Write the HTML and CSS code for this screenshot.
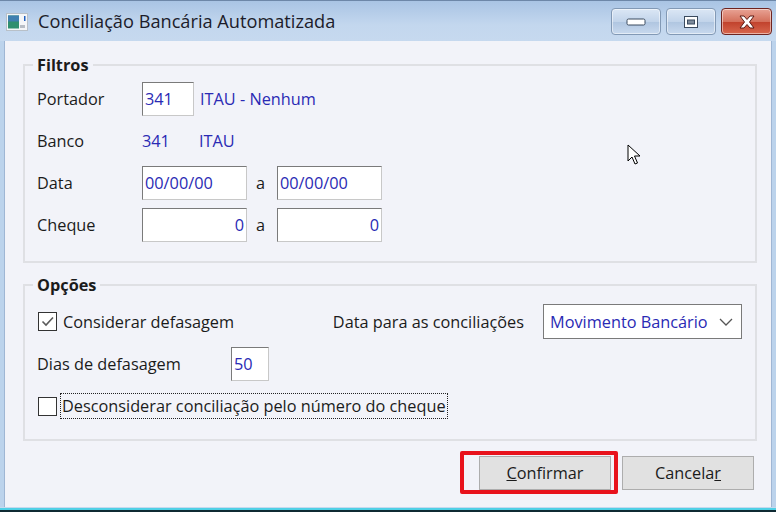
FILE: index.html
```html
<!DOCTYPE html>
<html lang="pt">
<head>
    <meta charset="UTF-8">
    <title>Conciliação Bancária Automatizada</title>
    <link rel="stylesheet" href="styles.css">
</head>
<body>
<div class="window">
    <div class="titlebar">
        <svg class="app-icon" width="22" height="18" viewBox="0 0 22 18">
            <rect x="0.5" y="0.5" width="21" height="17" fill="#f4f6f8" stroke="#b8c0c8"/>
            <rect x="2" y="2.5" width="11" height="13" fill="#2f8f6f"/>
            <rect x="2" y="2.5" width="11" height="6" fill="#3f7fb0"/>
            <rect x="14" y="12" width="5" height="3" fill="#b8bec6"/>
            <rect x="18" y="3" width="1.5" height="5" fill="#2060c0"/>
        </svg>
        <div class="title">Conciliação Bancária Automatizada</div>
        <div class="win-buttons">
            <div class="wbtn">
                <svg width="22" height="10" viewBox="0 0 22 10"><rect x="2" y="2" width="18" height="6" rx="1.5" fill="#fff" stroke="#3a4a5e"/></svg>
            </div>
            <div class="wbtn">
                <svg width="16" height="14" viewBox="0 0 16 14"><rect x="1.5" y="1.5" width="13" height="11" fill="#fff" stroke="#3a4a5e"/><rect x="4.5" y="5" width="7" height="4" fill="#7d8a9a" stroke="#3a4a5e"/></svg>
            </div>
            <div class="wbtn close">
                <svg width="22" height="16" viewBox="0 0 22 16"><path d="M4 2 H8 L11 5.5 L14 2 H18 L13.5 8 L18 14 H14 L11 10.5 L8 14 H4 L8.5 8 Z" fill="#fff" stroke="#5a1a14" stroke-width="1"/></svg>
            </div>
        </div>
    </div>

    <div class="content">
        <fieldset class="group filtros">
            <legend>Filtros</legend>
            <div class="row">
                <span class="lbl">Portador</span>
                <span class="box w-code">341</span>
                <span class="val">ITAU - Nenhum</span>
            </div>
            <div class="row">
                <span class="lbl">Banco</span>
                <span class="val code">341</span>
                <span class="val">ITAU</span>
            </div>
            <div class="row">
                <span class="lbl">Data</span>
                <span class="box w-range">00/00/00</span>
                <span class="sep">a</span>
                <span class="box w-range">00/00/00</span>
            </div>
            <div class="row">
                <span class="lbl">Cheque</span>
                <span class="box w-range num">0</span>
                <span class="sep">a</span>
                <span class="box w-range num">0</span>
            </div>
        </fieldset>

        <fieldset class="group opcoes">
            <legend>Opções</legend>
            <div class="row row-first">
                <span class="check on">
                    <svg width="17" height="17" viewBox="0 0 17 17"><path d="M3.5 8.5 L7 12 L14 4.5" fill="none" stroke="#5a5a5a" stroke-width="1.6"/></svg>
                </span>
                <span class="check-lbl">Considerar defasagem</span>
                <span class="lbl-data">Data para as conciliações</span>
                <span class="select">
                    Movimento Bancário
                    <svg class="chev" width="14" height="8" viewBox="0 0 14 8"><path d="M1 1 L7 7 L13 1" fill="none" stroke="#555" stroke-width="1.3"/></svg>
                </span>
            </div>
            <div class="row">
                <span class="lbl lbl-dias">Dias de defasagem</span>
                <span class="box w-dias">50</span>
            </div>
            <div class="row">
                <span class="check"></span>
                <span class="check-lbl focus">Desconsiderar conciliação pelo número do cheque</span>
            </div>
        </fieldset>

        <div class="actions">
            <div class="btn-wrap">
                <button class="btn"><u>C</u>onfirmar</button>
                <div class="highlight"></div>
            </div>
            <button class="btn">Cancela<u>r</u></button>
        </div>

        <svg class="cursor" width="14" height="22" viewBox="0 0 14 22">
            <path d="M1 1 L1 17 L5 13 L8 20 L10.5 19 L7.5 12 L13 12 Z" fill="#fff" stroke="#000" stroke-width="1"/>
        </svg>
    </div>
    <div class="taskbar-edge"></div>
</div>
</body>
</html>
```

FILE: styles.css
```css
* {
    box-sizing: border-box;
}

body {
    margin: 0;
    font-family: "Open Sans", "Noto Sans", sans-serif;
    font-size: 16.3px;
    color: #1b1b1b;
    background: #fff;
}

.window {
    width: 776px;
    height: 512px;
    overflow: hidden;
    display: flex;
    flex-direction: column;
    background: #bcd3ec;
}

.titlebar {
    height: 41px;
    display: flex;
    align-items: center;
    padding: 0 4px 0 6px;
    background: linear-gradient(#a9c4e4, #c3d7ee 60%, #c6d9ef);
    border-top: 1px solid #6d87a8;
}

.app-icon {
    margin-top: 2px;
}

.title {
    margin-left: 10px;
    font-size: 18.2px;
    color: #1c1c2a;
    flex: 1;
}

.win-buttons {
    display: flex;
    gap: 5px;
    align-self: flex-start;
    margin-top: 7px;
}

.wbtn {
    width: 50px;
    height: 27px;
    border: 1px solid #8299b5;
    border-radius: 4px;
    background: linear-gradient(#dbe7f5, #c2d4ea 50%, #afc5e0 51%, #c8d9ee);
    display: flex;
    align-items: center;
    justify-content: center;
    box-shadow: inset 0 0 0 1px rgba(255, 255, 255, 0.5);
}

.wbtn.close {
    width: 51px;
    border-color: #6e2420;
    background: linear-gradient(#e8a395, #d4705c 50%, #c0412c 51%, #d8674e);
}

.content {
    flex: 1;
    position: relative;
    margin: 0 4px 0 4px;
    padding: 14px 14px 0 18px;
    background: #f2f3f9;
    border-left: 1px solid #9fb6d4;
    border-right: 1px solid #9fb6d4;
}

.group {
    margin: 0;
    padding: 7px 13px 0 12px;
    border: 2px solid #dfe0e4;
    min-width: 0;
}

.group legend {
    font-weight: 700;
    padding: 0 4px;
    margin-left: -4px;
    line-height: 20px;
}

.filtros {
    height: 208px;
}

.opcoes {
    margin-top: 12px;
    height: 166px;
    padding-top: 9px;
}

.row {
    display: flex;
    align-items: center;
    height: 34px;
    margin-bottom: 8px;
}

.lbl {
    width: 105px;
}

.box {
    height: 34px;
    background: #fff;
    border: 1px solid #7a7a7a;
    border-color: #7a7a7a #c8c8c8 #c8c8c8 #7a7a7a;
    color: #2a2ab4;
    display: flex;
    align-items: center;
    padding: 0 2px;
}

.w-code {
    width: 52px;
}

.w-range {
    width: 105px;
}

.num {
    justify-content: flex-end;
}

.w-dias {
    width: 38px;
}

.val {
    color: #2a2ab4;
    margin-left: 6px;
}

.val.code {
    width: 51px;
    margin-left: 0;
}

.sep {
    width: 30px;
    padding-left: 9px;
}

.row-first {
    height: 35px;
}

.check {
    width: 19px;
    height: 19px;
    border: 1px solid #333;
    background: #fff;
    display: inline-flex;
    align-items: center;
    justify-content: center;
    margin-left: 1px;
}

.check-lbl {
    margin-left: 5px;
    padding: 1px 1px;
}

.check-lbl.focus {
    outline: 1px dotted #222;
    margin-left: 4px;
}

.lbl-data {
    margin-left: auto;
}

.select {
    margin-left: 19px;
    width: 199px;
    height: 35px;
    background: #fff;
    border: 1px solid #7a7a7a;
    color: #2a2ab4;
    display: flex;
    align-items: center;
    padding-left: 6px;
    position: relative;
}

.chev {
    position: absolute;
    right: 8px;
    top: 13px;
}

.lbl-dias {
    width: 194px;
}

.actions {
    display: flex;
    justify-content: flex-end;
    gap: 11px;
    margin-top: 15px;
    padding-right: 3px;
}

.btn-wrap {
    position: relative;
}

.btn {
    font-family: inherit;
    font-size: 16.3px;
    color: #1b1b1b;
    width: 132px;
    height: 34px;
    background: #e1e1e1;
    border: 1px solid #adadad;
    padding: 0;
}

.highlight {
    position: absolute;
    left: -19px;
    top: -5px;
    width: 158px;
    height: 43px;
    border: 4px solid #e8121c;
    border-radius: 2px;
    pointer-events: none;
}

.cursor {
    position: absolute;
    left: 622px;
    top: 103px;
}

.taskbar-edge {
    height: 5px;
    background: linear-gradient(#c7d9ee 0 1px, #4fd0e6 1px 3px, #0f2a33 3px);
}
```
